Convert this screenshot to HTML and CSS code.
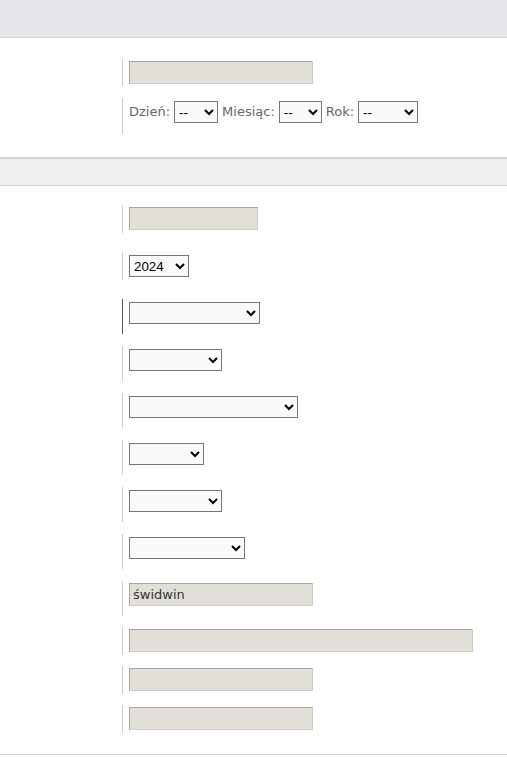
FILE: index.html
```html
<!DOCTYPE html>
<html lang="pl">
<head>
  <meta charset="UTF-8" />
  <title>Formularz</title>
  <link rel="stylesheet" href="styles.css">
</head>
<body>
  <!-- Dane podstawowe -->
  <div class="section-head top"></div>
  <div class="section first">
    <div class="row r-short">
      <input type="text" class="field w-184" />
    </div>
    <div class="row r-date last">
      <label>Dzień:</label>
      <select class="sel w-44"><option>--</option></select>
      <label>Miesiąc:</label>
      <select class="sel w-43"><option>--</option></select>
      <label>Rok:</label>
      <select class="sel w-60"><option>--</option></select>
    </div>
  </div>

  <!-- Szczegóły -->
  <div class="section-head"></div>
  <div class="section second">
    <div class="row r-short wide-gap">
      <input type="text" class="field w-129" />
    </div>
    <div class="row r-short wide-gap">
      <select class="sel w-60"><option>2024</option></select>
    </div>
    <div class="row r-tall dark">
      <select class="sel w-131"><option></option></select>
    </div>
    <div class="row r-tall">
      <select class="sel w-93"><option></option></select>
    </div>
    <div class="row r-tall">
      <select class="sel w-169"><option></option></select>
    </div>
    <div class="row r-tall">
      <select class="sel w-75"><option></option></select>
    </div>
    <div class="row r-tall">
      <select class="sel w-93"><option></option></select>
    </div>
    <div class="row r-tall">
      <select class="sel w-116"><option></option></select>
    </div>
    <div class="row r-tall tight">
      <input type="text" class="field w-184" value="świdwin" />
    </div>
    <div class="row r-short tight">
      <input type="text" class="field w-344" />
    </div>
    <div class="row r-short tight">
      <input type="text" class="field w-184" />
    </div>
    <div class="row r-short last">
      <input type="text" class="field w-184" />
    </div>
  </div>
</body>
</html>
```

FILE: styles.css
```css
body { margin: 0; font-family: "DejaVu Sans", Verdana, sans-serif; font-size: 13px; color: #666; background: #fff; }

.section-head { height: 26px; background: #efefef; border-top: 1px solid #d2d2d2; border-bottom: 1px solid #d2d2d2; }
.section-head.top { height: 37px; background: #e4e6e9; border-top: none; }

.section { border-bottom: 1px solid #d2d2d2; }
.section.first { padding: 21px 0 23px; }
.section.second { padding: 19px 0 21px; }

.row {
  margin-left: 122px;
  border-left: 1px solid #ccc;
  padding: 2px 0 0 6px;
  box-sizing: border-box;
  display: flex;
  align-items: flex-start;
  gap: 4px;
  margin-bottom: 12px;
}
.row.dark { border-left-color: #555; }
.row.wide-gap { margin-bottom: 19px; }
.row.tight { margin-bottom: 11px; }
.row.last { margin-bottom: 0; }
.r-short { height: 28px; }
.r-tall { height: 35px; }
.r-date { height: 36px; padding-top: 3px; }
.first .r-short { height: 27px; }

.r-date label { line-height: 21px; }

.field {
  height: 23px;
  box-sizing: border-box;
  margin: 0;
  padding: 0 3px;
  background: #e2dfd9;
  border: 1px solid #cfcbc5;
  border-top-color: #a8a5a0;
  border-left-color: #a8a5a0;
  font-family: "DejaVu Sans", Verdana, sans-serif;
  font-size: 13px;
  color: #333;
  outline: none;
}

.sel {
  height: 22px;
  margin: 1px 0 0;
  box-sizing: border-box;
  background: #fafafa;
  border: 1px solid #767676;
  border-radius: 0;
  font-family: "Liberation Sans", Arial, sans-serif;
  font-size: 13.33px;
  color: #000;
}
.r-date .sel { margin-top: 0; }

.w-43 { width: 43px; }
.w-44 { width: 44px; }
.w-60 { width: 60px; }
.w-75 { width: 75px; }
.w-93 { width: 93px; }
.w-116 { width: 116px; }
.w-129 { width: 129px; }
.w-131 { width: 131px; }
.w-169 { width: 169px; }
.w-184 { width: 184px; }
.w-344 { width: 344px; }
```
